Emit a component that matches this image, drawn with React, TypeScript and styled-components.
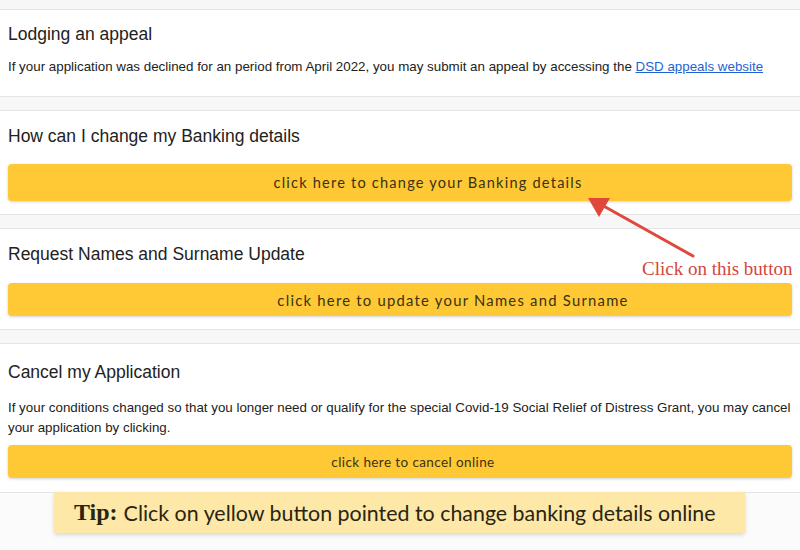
import React from 'react';
import { styled, createGlobalStyle } from 'styled-components';

const GlobalStyle = createGlobalStyle`
    html, body {
        margin: 0;
        padding: 0;
        background-color: #fbfbfb;
    }
    body {
        width: 800px;
        height: 550px;
        overflow: hidden;
        font-family: "Liberation Sans", Arial, sans-serif;
    }
`

const Page = styled.div`
    position: relative;
    width: 800px;
    height: 550px;
    display: flex;
    flex-direction: column;
    gap: 13px;
    padding-top: 9px;
    box-sizing: border-box;
    background: linear-gradient(#f7f7f7 0, #f7f7f7 492px, #fbfbfb 492px);
`

const Card = styled.section<{ $top: number; $bottom: number }>`
    background-color: #ffffff;
    border-top: 1px solid #e4e4e4;
    border-bottom: 1px solid #e4e4e4;
    padding: ${ p => p.$top }px 8px ${ p => p.$bottom }px 8px;
    display: flex;
    flex-direction: column;
`

const Title = styled.h3`
    margin: 0;
    font-family: "Liberation Sans", Arial, sans-serif;
    font-weight: 400;
    font-size: 17.5px;
    line-height: 20px;
    color: #222222;
`

const Paragraph = styled.p<{ $gap: number }>`
    margin: ${ p => p.$gap }px 0 0 0;
    font-size: 13.35px;
    line-height: 20px;
    color: #222222;
`

const Link = styled.a`
    color: #1f63d3;
    text-decoration: underline;
`

const YellowButton = styled.button<{ $height: number; $gap: number; $size: number; $spacing: number; $shift: number }>`
    margin-top: ${ p => p.$gap }px;
    width: 100%;
    height: ${ p => p.$height }px;
    padding: 0 0 0 ${ p => p.$shift }px;
    border: none;
    border-radius: 4px;
    background-color: #fec934;
    box-shadow: 0 1px 3px rgba(0, 0, 0, 0.18);
    font-family: Lato, "Open Sans", sans-serif;
    font-size: ${ p => p.$size }px;
    letter-spacing: ${ p => p.$spacing }px;
    color: #3b3114;
    cursor: pointer;
`

const Annotation = styled.div`
    position: absolute;
    left: 580px;
    top: 192px;
    width: 220px;
    height: 95px;
`

const AnnotationText = styled.span`
    position: absolute;
    left: 62px;
    top: 66px;
    font-family: "Liberation Serif", "Times New Roman", serif;
    font-size: 19px;
    color: #d4463d;
    white-space: nowrap;
`

const TipBox = styled.div`
    position: absolute;
    left: 54px;
    top: 492px;
    width: 691px;
    height: 41px;
    box-sizing: border-box;
    padding-left: 20px;
    display: flex;
    align-items: center;
    background-color: #fde8a8;
    border-radius: 2px;
    box-shadow: 0 2px 4px rgba(0, 0, 0, 0.15);
    font-family: Lato, "Open Sans", sans-serif;
    font-size: 21.4px;
    color: #2a2412;
    white-space: nowrap;
`

const TipLabel = styled.strong`
    font-family: "Liberation Serif", "Times New Roman", serif;
    font-weight: 700;
    font-size: 24px;
    margin-right: 6px;
`

const Arrow = () => (
    <svg width="220" height="95" viewBox="0 0 220 95">
        <line x1="113" y1="64" x2="20" y2="12" stroke="#e0483b" strokeWidth="3" strokeLinecap="round" />
        <polygon points="8,6 30,6 19,25" fill="#e0483b" />
    </svg>
);

const App = () => {
    return (
        <>
            <GlobalStyle />
            <Page>
                <Card $top={14} $bottom={19}>
                    <Title>Lodging an appeal</Title>
                    <Paragraph $gap={13}>
                        If your application was declined for an period from April 2022, you may submit an appeal by accessing the <Link href="#">DSD appeals website</Link>
                    </Paragraph>
                </Card>
                <Card $top={15} $bottom={13}>
                    <Title>How can I change my Banking details</Title>
                    <YellowButton $height={37} $gap={18} $size={14.6} $spacing={1.2} $shift={56}>
                        click here to change your Banking details
                    </YellowButton>
                </Card>
                <Card $top={15} $bottom={13}>
                    <Title>Request Names and Surname Update</Title>
                    <YellowButton $height={33} $gap={19} $size={14.8} $spacing={1.25} $shift={106}>
                        click here to update your Names and Surname
                    </YellowButton>
                </Card>
                <Card $top={18} $bottom={14}>
                    <Title>Cancel my Application</Title>
                    <Paragraph $gap={16}>
                        If your conditions changed so that you longer need or qualify for the special Covid-19 Social Relief of Distress Grant, you may cancel your application by clicking.
                    </Paragraph>
                    <YellowButton $height={33} $gap={7} $size={13.5} $spacing={0.4} $shift={26}>
                        click here to cancel online
                    </YellowButton>
                </Card>
                <Annotation>
                    <Arrow />
                    <AnnotationText>Click on this button</AnnotationText>
                </Annotation>
                <TipBox>
                    <TipLabel>Tip:</TipLabel>
                    Click on yellow button pointed to change banking details online
                </TipBox>
            </Page>
        </>
    );
}

export default App;
